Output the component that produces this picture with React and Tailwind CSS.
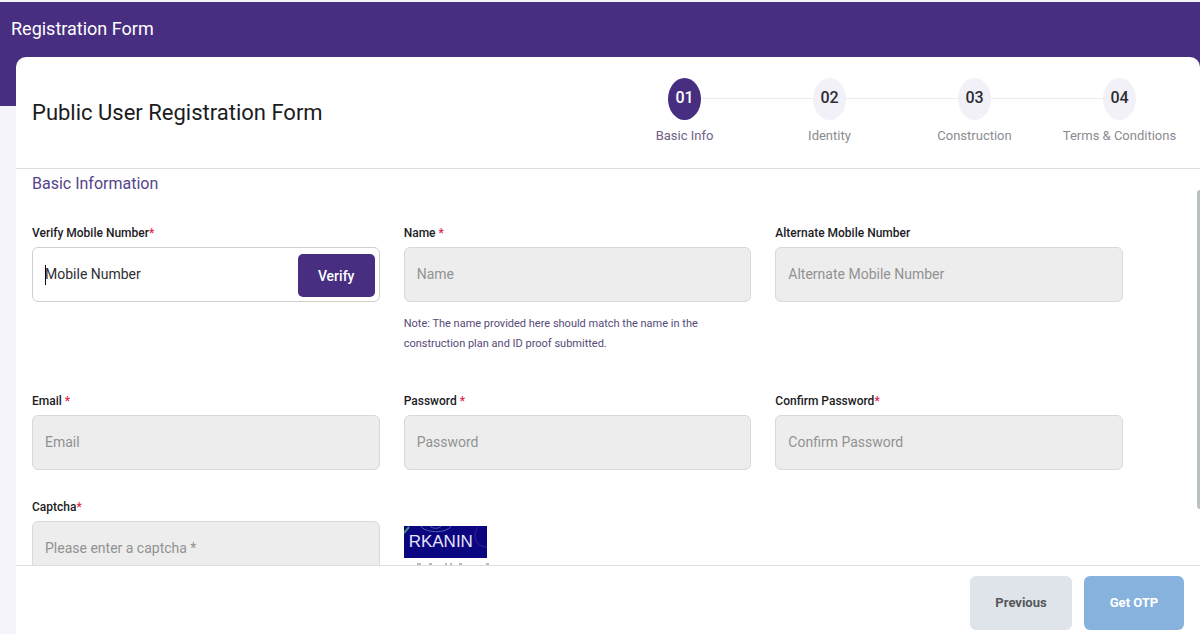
import React from "react";

const steps = [
  { number: "01", label: "Basic Info", active: true },
  { number: "02", label: "Identity" },
  { number: "03", label: "Construction" },
  { number: "04", label: "Terms & Conditions" },
];

function Step({ step, first, last }) {
  return (
    <li className="flex flex-1 flex-col items-center gap-1">
      <div className="flex w-full items-center">
        <span className={first ? "h-px flex-1" : "h-px flex-1 bg-[#ebebee]"} />
        <span
          className={
            step.active
              ? "flex h-[42px] w-[33px] items-center justify-center rounded-[50%] bg-[#472e80] pb-[2px] text-base font-medium text-white"
              : "flex h-[42px] w-[33px] items-center justify-center rounded-[50%] bg-[#f2f1f8] pb-[2px] text-base font-medium text-[#2d2b33]"
          }
        >
          {step.number}
        </span>
        <span className={last ? "h-px flex-1" : "h-px flex-1 bg-[#ebebee]"} />
      </div>
      <span
        className={
          step.active
            ? "text-[13px] leading-6 whitespace-nowrap text-[#6d6288]"
            : "text-[13px] leading-6 whitespace-nowrap text-[#8b8b90]"
        }
      >
        {step.label}
      </span>
    </li>
  );
}

function FieldLabel({ id, children, star }) {
  return (
    <label htmlFor={id} className="mb-1 block text-xs leading-5 font-medium text-[#1c1c1f]">
      {children}
      {star && <span className="text-[#e5284a]">{star}</span>}
    </label>
  );
}

function Field({ id, label, star, placeholder, type = "text", children }) {
  return (
    <div>
      <FieldLabel id={id} star={star}>{label}</FieldLabel>
      <input
        id={id}
        type={type}
        disabled
        placeholder={placeholder}
        className="block h-[55px] w-full rounded-md border border-[#d9d9d9] bg-[#ededed] px-3 pb-[2px] text-sm placeholder:text-[#929292]"
      />
      {children}
    </div>
  );
}

export default function App() {
  return (
    <div className="flex h-screen flex-col bg-[#f5f4fb] font-['Roboto','Liberation_Sans',sans-serif]">
      <header className="mt-[2px] -mb-[49px] h-[104px] shrink-0 bg-[#472e80] px-[11px] pt-[11px]">
        <h1 className="text-lg leading-8 text-white">Registration Form</h1>
      </header>

      <main className="ml-4 flex min-h-0 flex-1 flex-col rounded-t-[10px] bg-white">
        <div className="flex h-28 shrink-0 items-center justify-between border-b border-[#dedede] pr-2 pl-4">
          <h2 className="text-[22px] text-[#1b1b1e]">Public User Registration Form</h2>
          <ol className="flex w-[580px]">
            {steps.map((step, i) => (
              <Step key={step.number} step={step} first={i === 0} last={i === steps.length - 1} />
            ))}
          </ol>
        </div>

        <div className="flex min-h-0 flex-1">
          <form className="min-w-0 flex-1 overflow-hidden pr-[74px] pl-4">
            <h3 className="mb-6 text-base leading-[30px] text-[#54448a]">Basic Information</h3>
            <div className="grid grid-cols-3 gap-x-6 gap-y-[27px]">
              <div>
                <FieldLabel id="mobile" star="*">Verify Mobile Number</FieldLabel>
                <div className="relative flex h-[55px] items-center rounded-md border border-[#cfcfcf] pr-1">
                  <span className="absolute left-3 h-5 w-px bg-black" />
                  <input
                    id="mobile"
                    type="tel"
                    placeholder="Mobile Number"
                    className="h-full min-w-0 flex-1 px-3 pb-[2px] text-sm outline-none placeholder:text-[#303033]"
                  />
                  <button
                    type="button"
                    className="mt-[2px] h-[43px] w-[77px] shrink-0 rounded-[5px] bg-[#472e80] text-sm font-medium text-white"
                  >
                    Verify
                  </button>
                </div>
              </div>
              <Field id="name" label="Name " star="*" placeholder="Name">
                <p className="mt-3 mb-[10px] max-w-[310px] text-[11px] leading-5 text-[#564a78]">
                  Note: The name provided here should match the name in the construction plan and ID
                  proof submitted.
                </p>
              </Field>
              <Field id="alternate" label="Alternate Mobile Number" placeholder="Alternate Mobile Number" />
              <Field id="email" label="Email " star="*" placeholder="Email" type="email" />
              <Field id="password" label="Password " star="*" placeholder="Password" type="password" />
              <Field id="confirm" label="Confirm Password" star="*" placeholder="Confirm Password" type="password" />
              <Field id="captcha" label="Captcha" star="*" placeholder="Please enter a captcha *" />
              <div className="pt-[29px]">
                <div className="relative h-8 w-[83px] bg-[#0b0580]">
                  <svg viewBox="0 0 83 32" className="absolute inset-0 h-full w-full" fill="none" aria-hidden="true">
                    <path d="M17 0c3 7 26 8 30 0M26 0c2 3 9 3 11 0" stroke="#4564a8" />
                    <path d="M0 7 5 1" stroke="#4b8a78" strokeWidth="2" />
                    <path d="M74 1c-6 8-3 20 9 20" stroke="#41208e" />
                  </svg>
                  <span className="relative block pl-[5px] font-['Liberation_Sans',sans-serif] text-[17px] leading-8 text-[#e6e4fa]">
                    RKANIN
                  </span>
                </div>
                <svg viewBox="0 0 88 2" className="mt-[5px] h-[2px] w-[88px]" aria-hidden="true">
                  <path d="M13 1h4M25 1h3M41 1h2M46 1h2M55 1h3M82 1h3" stroke="#b9b9be" strokeWidth="2" />
                </svg>
              </div>
            </div>
          </form>
          <div className="mt-[21px] mb-14 w-[3px] shrink-0 rounded-l-sm bg-[#b9c1c3]" />
        </div>

        <footer className="flex shrink-0 items-start justify-end gap-3 border-t border-[#dedede] pt-[10px] pr-4 pb-1">
          <button type="button" className="h-[54px] w-[102px] rounded-md bg-[#dee4ea] text-[13px] font-bold text-[#55575b]">
            Previous
          </button>
          <button type="button" className="h-[54px] w-[100px] rounded-md bg-[#87b2dd] text-[13px] font-bold text-white">
            Get OTP
          </button>
        </footer>
      </main>
    </div>
  );
}
